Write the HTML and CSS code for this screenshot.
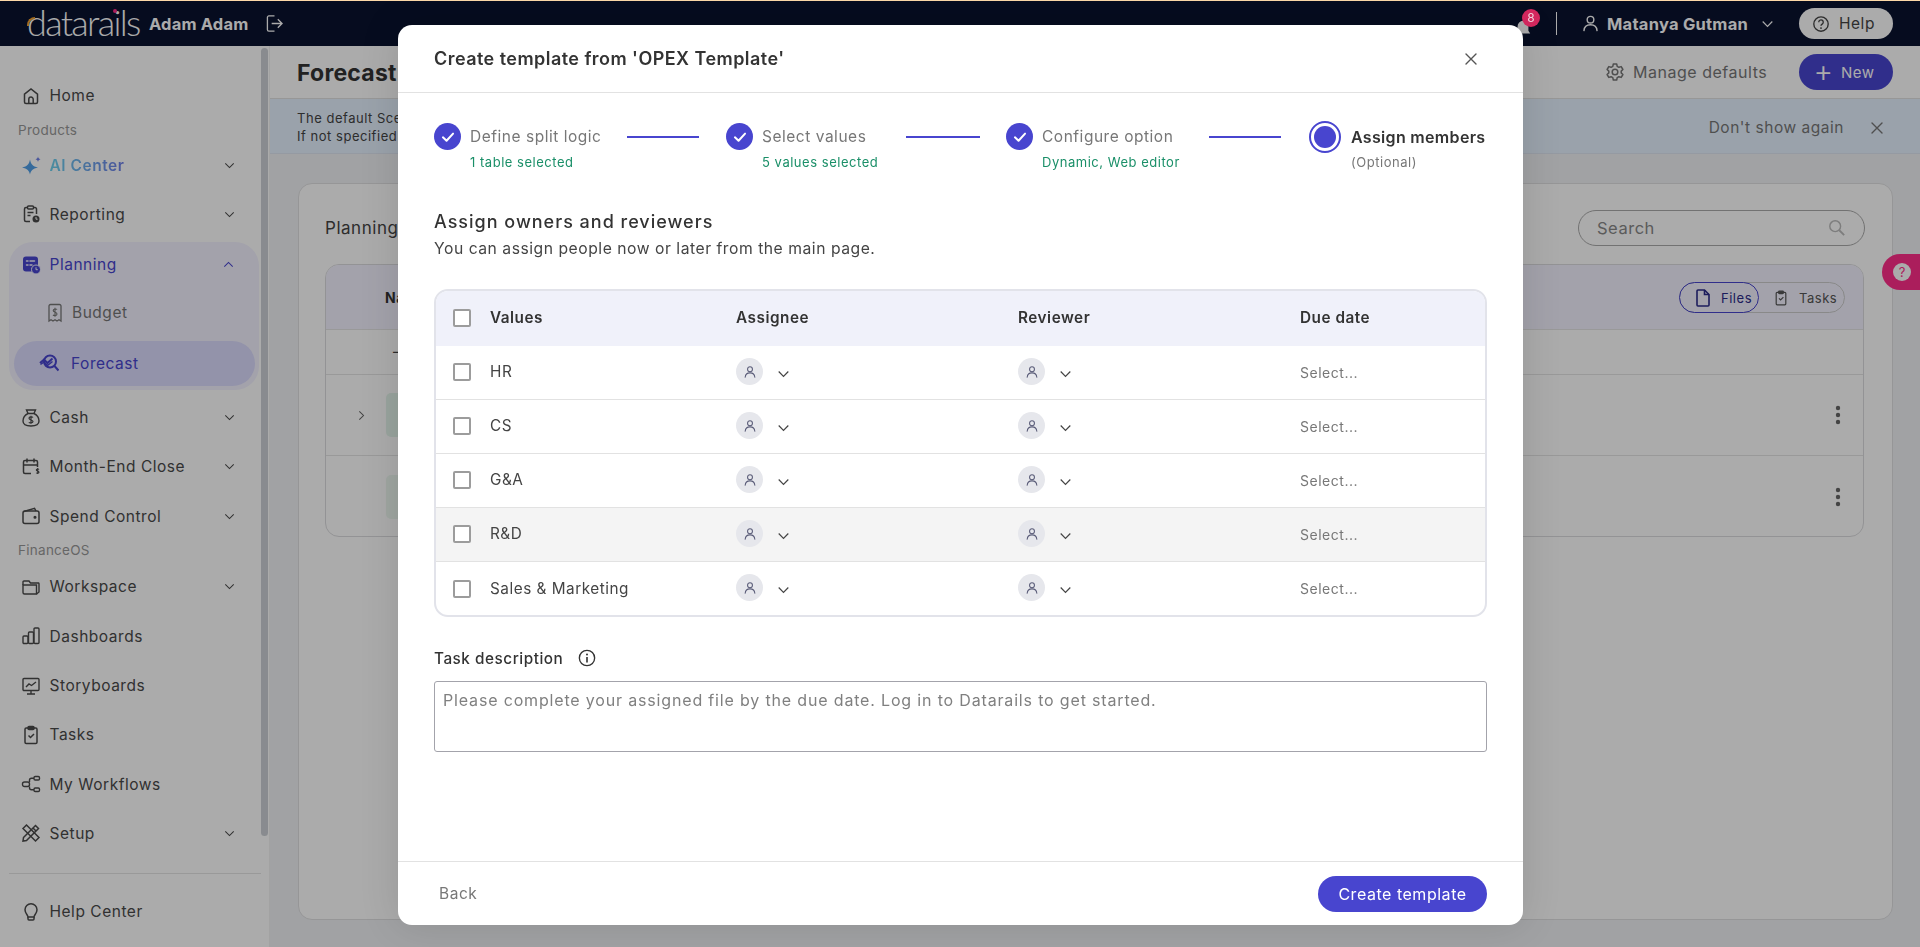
FILE: index.html
```html
<!DOCTYPE html>
<html lang="en">
<head>
<meta charset="utf-8">
<title>Create template</title>
<link rel="stylesheet" href="styles.css">
</head>
<body>
<svg class="sprite" aria-hidden="true">
  <symbol id="chev" viewBox="0 0 12 8"><path d="M1.2 1.5 6 6.3l4.8-4.8" fill="none" stroke="currentColor" stroke-width="1.2"/></symbol>
  <symbol id="person" viewBox="0 0 16 16"><circle cx="8" cy="4.8" r="2.8" fill="none" stroke="currentColor" stroke-width="1.2"/><path d="M2.5 14c.2-3.2 2.4-5 5.5-5s5.300 1.800 5.500 5" fill="none" stroke="currentColor" stroke-width="1.2" stroke-linecap="round"/></symbol>
  <symbol id="check" viewBox="0 0 16 16"><path d="M3.500 8.300 6.700 11.300 12.500 5" fill="none" stroke="#fff" stroke-width="1.800" stroke-linecap="round" stroke-linejoin="round"/></symbol>
  <symbol id="x" viewBox="0 0 14 14"><path d="M2 2l10 10M12 2 2 12" fill="none" stroke="currentColor" stroke-width="1.400" stroke-linecap="round"/></symbol>
  <symbol id="home" viewBox="0 0 20 20" fill="none" stroke="currentColor" stroke-width="1.500"><path d="M3.500 8.200 10 3l6.500 5.200V16a1.500 1.500 0 0 1-1.500 1.500H5A1.500 1.500 0 0 1 3.500 16z"/><path d="M7.800 17.500v-4.200a2.200 2.200 0 0 1 4.400 0v4.200"/></symbol>
  <symbol id="spark" viewBox="0 0 20 20"><path d="M9 4.500c.8 4.600 2.600 6.800 8 8-5.400 1.200-7.200 3.400-8 7-.8-3.600-2.600-5.800-8-7 5.400-1.200 7.200-3.400 8-8z" fill="#4f9fe8"/><path d="M17 1.500c.3 1.500.8 2.200 2.500 2.800-1.700.5-2.200 1.200-2.500 2.700-.3-1.500-.8-2.200-2.500-2.700 1.700-.6 2.200-1.300 2.500-2.800z" fill="#6d7fe8"/></symbol>
  <symbol id="report" viewBox="0 0 20 20" fill="none" stroke="currentColor" stroke-width="1.500"><path d="M9 17.500H5A1.500 1.500 0 0 1 3.500 16V5A1.500 1.500 0 0 1 5 3.500h1.500M12.500 3.500H14A1.500 1.500 0 0 1 15.500 5v5"/><rect x="6.500" y="2" width="6" height="3" rx="1"/><path d="M6.500 8.500h6M6.500 11.500h3"/><circle cx="15" cy="15" r="3.500" fill="currentColor" stroke="none"/><path d="M15 13v2.200h1.600" stroke="#fff" stroke-width="1"/></symbol>
  <symbol id="plan" viewBox="0 0 20 20"><rect x="2" y="1.500" width="15" height="15" rx="3" fill="currentColor"/><path d="M5.500 6h1.500M9 6h4.500M5.500 10h1.500M9 10h2" stroke="#f3f2ff" stroke-width="1.500" stroke-linecap="round"/><circle cx="15" cy="14.500" r="4.500" fill="currentColor" stroke="#f3f2ff"/><path d="M15 12.300v2.400h1.800" stroke="#f3f2ff" fill="none"/></symbol>
  <symbol id="budget" viewBox="0 0 16 20" fill="none" stroke="currentColor" stroke-width="1.300"><path d="M2 3a1.500 1.500 0 0 1 1.500-1.500h9A1.500 1.500 0 0 1 14 3v15l-2-1.300-2 1.300-2-1.300L6 18l-2-1.300L2 18z"/><path d="M10 6.500C9.500 5.800 6.200 5.500 6.200 7.500S10 9 10 11s-3.300 1.700-4 1M8 4.800v9" stroke-width="1.100"/></symbol>
  <symbol id="forecast" viewBox="0 0 20 20" fill="none" stroke="currentColor" stroke-width="2"><circle cx="11" cy="8.500" r="6"/><path d="M15.500 13l4 4.500"/><path d="M1 10 5 6.500l3.500 3.500 5-4.500"/><path d="M1.500 11.500 5 9l3.500 3.500 5-4" stroke-width="1.500"/></symbol>
  <symbol id="cash" viewBox="0 0 20 20" fill="none" stroke="currentColor" stroke-width="1.400"><path d="M7 5.500 5.500 2h9L13 5.500"/><path d="M7 5.500h6c3 1.500 5 4.500 5 7.500 0 3.500-3 5-8 5s-8-1.500-8-5c0-3 2-6 5-7.500z"/><path d="M12 9.500c-.6-.8-4-1-4 .8S12 11.800 12 13.500s-3.400 1.700-4.200.8M10 7.800v8" stroke-width="1.200"/></symbol>
  <symbol id="month" viewBox="0 0 20 20" fill="none" stroke="currentColor" stroke-width="1.500"><path d="M10 16.500H4A1.500 1.500 0 0 1 2.500 15V5A1.500 1.500 0 0 1 4 3.500h11A1.500 1.500 0 0 1 16.500 5v5M2.500 8h14M6 1.500v4M13 1.500v4"/><path d="M18 12.500c-.5-.6-2.700-.7-2.700.5s2.700 1 2.700 2.200-2.300 1.200-2.800.5M16.700 11v6" stroke-width="1.100"/></symbol>
  <symbol id="wallet" viewBox="0 0 20 20" fill="none" stroke="currentColor" stroke-width="1.500"><rect x="2" y="5" width="16" height="12.500" rx="2"/><path d="M3 5.500 13.500 2.300 15 5"/><circle cx="14" cy="11.300" r=".8" fill="currentColor"/></symbol>
  <symbol id="folder" viewBox="0 0 20 20" fill="none" stroke="currentColor" stroke-width="1.400"><path d="M2 8h13.500v9H3.500A1.500 1.500 0 0 1 2 15.500z"/><path d="M2 8V5a1 1 0 0 1 1-1h5l1.500 2H17.500a.8.8 0 0 1 .5.700V15l-2.500 2"/></symbol>
  <symbol id="bars" viewBox="0 0 20 20" fill="none" stroke="currentColor" stroke-width="1.400"><rect x="2" y="10" width="5" height="7.500" rx="1"/><rect x="7.500" y="6" width="5" height="11.500" rx="1"/><rect x="13" y="2" width="5" height="15.500" rx="1"/></symbol>
  <symbol id="screen" viewBox="0 0 20 20" fill="none" stroke="currentColor" stroke-width="1.400"><rect x="2" y="2.500" width="16" height="12" rx="1"/><path d="M10 14.500v3.500M6 18h8M5 11l3-3 2.500 1.500L15 6"/></symbol>
  <symbol id="clip" viewBox="0 0 20 20" fill="none" stroke="currentColor" stroke-width="1.500"><rect x="4" y="3" width="12" height="15.500" rx="1.200"/><rect x="7" y="1.500" width="6" height="3" rx="1" fill="currentColor"/><path d="M7.500 10.500 9.500 12.500 13 9"/></symbol>
  <symbol id="flow" viewBox="0 0 20 20" fill="none" stroke="currentColor" stroke-width="1.400"><rect x="1.500" y="8" width="7" height="4.500" rx="2"/><rect x="13" y="2.500" width="5.500" height="3.500" rx="1.200"/><rect x="13" y="14" width="5.500" height="3.500" rx="1.200"/><path d="M13 4.300h-2.500a2 2 0 0 0-2 2V8M13 15.800h-2.500a2 2 0 0 1-2-2v-1.300"/></symbol>
  <symbol id="setup" viewBox="0 0 20 20" fill="none" stroke="currentColor" stroke-width="1.500"><path d="M2.500 14.500 14.500 2.500 17.500 5.500 5.500 17.500l-3.500.5z"/><path d="M12 5l3 3M5.500 2 2 5.500 14.500 18l3.500-3.500z"/></symbol>
  <symbol id="bulb" viewBox="0 0 20 20" fill="none" stroke="currentColor" stroke-width="1.500"><path d="M7 15c0-2-3-3.500-3-7.200a6 6 0 0 1 12 0C16 11.500 13 13 13 15z"/><path d="M7.500 18h5M7 15v2a1 1 0 0 0 1 1h4a1 1 0 0 0 1-1v-2"/></symbol>
  <symbol id="exit" viewBox="0 0 18 20" fill="none" stroke="currentColor" stroke-width="1.400"><path d="M9 2H3a1.500 1.500 0 0 0-1.500 1.500v13A1.500 1.500 0 0 0 3 18h6"/><path d="M6 10h11M12.500 5.500 17 10l-4.500 4.500"/></symbol>
  <symbol id="quest" viewBox="0 0 20 20"><circle cx="10" cy="10" r="8" fill="none" stroke="currentColor" stroke-width="1.500"/><path d="M7.500 8a2.500 2.500 0 1 1 3.800 2.100c-.8.500-1.300 1-1.300 1.900" fill="none" stroke="currentColor" stroke-width="1.500"/><circle cx="10" cy="14.500" r="1" fill="currentColor"/></symbol>
  <symbol id="gear" viewBox="0 0 20 20" fill="none" stroke="currentColor" stroke-width="1.500"><circle cx="10" cy="10" r="2.800"/><path d="M8.300 2h3.400l.5 2.300 1.700 1 2.300-.7 1.700 2.900-1.700 1.600v1.800l1.700 1.600-1.700 2.900-2.300-.7-1.700 1-.5 2.300H8.300l-.5-2.300-1.700-1-2.300.7-1.700-2.900 1.700-1.600V9.100L2.100 7.500l1.700-2.900 2.300.7 1.700-1z" stroke-linejoin="round"/></symbol>
  <symbol id="search" viewBox="0 0 20 20" fill="none" stroke="currentColor" stroke-width="1.600"><circle cx="8" cy="8" r="6"/><path d="M12.500 12.500 18 18" stroke-width="2"/></symbol>
  <symbol id="file" viewBox="0 0 16 20" fill="none" stroke="currentColor" stroke-width="1.600"><path d="M2 3a1 1 0 0 1 1-1h6.500L14 6.500V17a1 1 0 0 1-1 1H3a1 1 0 0 1-1-1z"/><path d="M9.500 2v4.500H14"/></symbol>
  <symbol id="kebab" viewBox="0 0 6 20"><circle cx="3" cy="3" r="2.200" fill="currentColor"/><circle cx="3" cy="10" r="2.200" fill="currentColor"/><circle cx="3" cy="17" r="2.200" fill="currentColor"/></symbol>
  <symbol id="info" viewBox="0 0 20 20"><circle cx="10" cy="10" r="8.500" fill="none" stroke="currentColor" stroke-width="1.500"/><circle cx="10" cy="6" r="1.100" fill="currentColor"/><path d="M10 9v6" stroke="currentColor" stroke-width="1.800"/></symbol>
  <symbol id="bell" viewBox="0 0 20 20"><path d="M10 2a6 6 0 0 1 6 6v5l2 3H2l2-3V8a6 6 0 0 1 6-6z" fill="currentColor"/></symbol>
</svg>

<div class="app">
  <header class="topbar">
    <div class="brand"><span class="logo">datarails<span class="logo-arc"></span><span class="logo-dot"></span></span><span class="account">Adam Adam</span><svg class="exit"><use href="#exit"/></svg></div>
    <div class="top-right">
      <span class="bell-wrap"><svg class="bell"><use href="#bell"/></svg><span class="badge">8</span></span>
      <span class="divider"></span>
      <svg class="user-ico"><use href="#person"/></svg>
      <span class="user-name">Matanya Gutman</span>
      <svg class="user-chev"><use href="#chev"/></svg>
      <span class="help-pill"><svg class="help-ico"><use href="#quest"/></svg>Help</span>
    </div>
  </header>
  <div class="body">
    <aside class="sidebar">
      <nav class="nav">
        <a class="nav-item"><svg class="ico"><use href="#home"/></svg><span>Home</span></a>
        <div class="nav-label">Products</div>
        <a class="nav-item ai-row"><svg class="ico"><use href="#spark"/></svg><span class="ai">AI Center</span><svg class="nav-chev"><use href="#chev"/></svg></a>
        <a class="nav-item"><svg class="ico"><use href="#report"/></svg><span>Reporting</span><svg class="nav-chev"><use href="#chev"/></svg></a>
        <div class="group">
          <a class="nav-item group-head"><svg class="ico"><use href="#plan"/></svg><span>Planning</span><svg class="nav-chev up"><use href="#chev"/></svg></a>
          <a class="nav-item sub"><svg class="sub-ico"><use href="#budget"/></svg><span>Budget</span></a>
          <a class="nav-item sub current"><svg class="sub-ico wide"><use href="#forecast"/></svg><span>Forecast</span></a>
        </div>
        <a class="nav-item after-group"><svg class="ico"><use href="#cash"/></svg><span>Cash</span><svg class="nav-chev"><use href="#chev"/></svg></a>
        <a class="nav-item"><svg class="ico"><use href="#month"/></svg><span>Month-End Close</span><svg class="nav-chev"><use href="#chev"/></svg></a>
        <a class="nav-item"><svg class="ico"><use href="#wallet"/></svg><span>Spend Control</span><svg class="nav-chev"><use href="#chev"/></svg></a>
        <div class="nav-label short">FinanceOS</div>
        <a class="nav-item"><svg class="ico"><use href="#folder"/></svg><span>Workspace</span><svg class="nav-chev"><use href="#chev"/></svg></a>
        <a class="nav-item"><svg class="ico"><use href="#bars"/></svg><span>Dashboards</span></a>
        <a class="nav-item"><svg class="ico"><use href="#screen"/></svg><span>Storyboards</span></a>
        <a class="nav-item"><svg class="ico"><use href="#clip"/></svg><span>Tasks</span></a>
        <a class="nav-item"><svg class="ico"><use href="#flow"/></svg><span>My Workflows</span></a>
        <a class="nav-item"><svg class="ico"><use href="#setup"/></svg><span>Setup</span><svg class="nav-chev"><use href="#chev"/></svg></a>
      </nav>
      <div class="nav-foot"><a class="nav-item"><svg class="ico"><use href="#bulb"/></svg><span>Help Center</span></a></div>
      <div class="scroll-thumb"></div>
    </aside>
    <main class="main">
      <div class="page-head">
        <h1 class="page-title">Forecast</h1>
        <div class="page-actions">
          <span class="manage"><svg class="gear"><use href="#gear"/></svg>Manage defaults</span>
          <span class="new-btn"><span class="plus">+</span>New</span>
        </div>
      </div>
      <div class="banner">
        <p class="banner-text">The default Scenario<br>If not specified</p>
        <span class="banner-side">Don't show again<svg class="banner-x"><use href="#x"/></svg></span>
      </div>
      <section class="card">
        <div class="card-head">
          <h2 class="card-title">Planning</h2>
          <div class="search"><span>Search</span><svg class="search-ico"><use href="#search"/></svg></div>
        </div>
        <div class="files">
          <div class="files-head">
            <span class="files-name">Name</span>
            <div class="toggle">
              <span class="tog on"><svg class="tog-ico"><use href="#file"/></svg>Files</span>
              <span class="tog"><svg class="tog-ico"><use href="#clip"/></svg>Tasks</span>
            </div>
          </div>
          <div class="files-sub">—</div>
          <div class="files-row"><svg class="row-open"><use href="#chev"/></svg><span class="thumb"></span><svg class="kebab"><use href="#kebab"/></svg></div>
          <div class="files-row"><span class="row-gap"></span><span class="thumb pale"></span><svg class="kebab"><use href="#kebab"/></svg></div>
        </div>
      </section>
    </main>
  </div>
  <div class="help-tab"><span class="help-dot">?</span></div>
</div>

<div class="scrim"></div>

<div class="modal">
  <div class="modal-head">
    <h2 class="modal-title">Create template from 'OPEX Template'</h2>
    <svg class="modal-x"><use href="#x"/></svg>
  </div>
  <div class="modal-body">
    <div class="stepper">
      <div class="step">
        <span class="step-dot"><svg class="step-check"><use href="#check"/></svg></span>
        <div class="step-text"><div class="step-name">Define split logic</div><div class="step-sub">1 table selected</div></div>
      </div>
      <span class="step-line"></span>
      <div class="step">
        <span class="step-dot"><svg class="step-check"><use href="#check"/></svg></span>
        <div class="step-text"><div class="step-name">Select values</div><div class="step-sub">5 values selected</div></div>
      </div>
      <span class="step-line"></span>
      <div class="step third">
        <span class="step-dot"><svg class="step-check"><use href="#check"/></svg></span>
        <div class="step-text"><div class="step-name">Configure option</div><div class="step-sub">Dynamic, Web editor</div></div>
      </div>
      <span class="step-line"></span>
      <div class="step last">
        <span class="step-ring"><span class="step-fill"></span></span>
        <div class="step-text"><div class="step-name active">Assign members</div><div class="step-sub muted">(Optional)</div></div>
      </div>
    </div>

    <h3 class="sec-title">Assign owners and reviewers</h3>
    <p class="sec-sub">You can assign people now or later from the main page.</p>

    <div class="table">
      <div class="t-row t-head">
        <div class="t-first"><span class="box"></span>Values</div><div>Assignee</div><div>Reviewer</div><div>Due date</div>
      </div>
      <div class="t-row">
        <div class="t-first"><span class="box"></span>HR</div>
        <div class="pick"><span class="avatar"><svg class="avatar-ico"><use href="#person"/></svg></span><svg class="pick-chev"><use href="#chev"/></svg></div>
        <div class="pick"><span class="avatar"><svg class="avatar-ico"><use href="#person"/></svg></span><svg class="pick-chev"><use href="#chev"/></svg></div>
        <div class="due">Select...</div>
      </div>
      <div class="t-row">
        <div class="t-first"><span class="box"></span>CS</div>
        <div class="pick"><span class="avatar"><svg class="avatar-ico"><use href="#person"/></svg></span><svg class="pick-chev"><use href="#chev"/></svg></div>
        <div class="pick"><span class="avatar"><svg class="avatar-ico"><use href="#person"/></svg></span><svg class="pick-chev"><use href="#chev"/></svg></div>
        <div class="due">Select...</div>
      </div>
      <div class="t-row">
        <div class="t-first"><span class="box"></span>G&amp;A</div>
        <div class="pick"><span class="avatar"><svg class="avatar-ico"><use href="#person"/></svg></span><svg class="pick-chev"><use href="#chev"/></svg></div>
        <div class="pick"><span class="avatar"><svg class="avatar-ico"><use href="#person"/></svg></span><svg class="pick-chev"><use href="#chev"/></svg></div>
        <div class="due">Select...</div>
      </div>
      <div class="t-row hover">
        <div class="t-first"><span class="box"></span>R&amp;D</div>
        <div class="pick"><span class="avatar"><svg class="avatar-ico"><use href="#person"/></svg></span><svg class="pick-chev"><use href="#chev"/></svg></div>
        <div class="pick"><span class="avatar"><svg class="avatar-ico"><use href="#person"/></svg></span><svg class="pick-chev"><use href="#chev"/></svg></div>
        <div class="due">Select...</div>
      </div>
      <div class="t-row end">
        <div class="t-first"><span class="box"></span>Sales &amp; Marketing</div>
        <div class="pick"><span class="avatar"><svg class="avatar-ico"><use href="#person"/></svg></span><svg class="pick-chev"><use href="#chev"/></svg></div>
        <div class="pick"><span class="avatar"><svg class="avatar-ico"><use href="#person"/></svg></span><svg class="pick-chev"><use href="#chev"/></svg></div>
        <div class="due">Select...</div>
      </div>
    </div>

    <div class="task-label">Task description<svg class="info"><use href="#info"/></svg></div>
    <div class="task-input">Please complete your assigned file by the due date. Log in to Datarails to get started.</div>
  </div>
  <div class="modal-foot">
    <span class="back">Back</span>
    <span class="create">Create template</span>
  </div>
</div>
</body>
</html>
```

FILE: styles.css
```css
* { box-sizing: border-box; }
html, body { margin: 0; height: 100%; }
body { font-family: Inter, "Liberation Sans", sans-serif; font-size: 15px; color: #444; overflow: hidden; background: #f0f2f5; letter-spacing: .035em; }
h1, h2, h3, p { margin: 0; font: inherit; }
svg { display: block; flex: none; }
.sprite { display: none; }

.app { height: 947px; display: flex; flex-direction: column; border-top: 1px solid #fdd9a8; position: relative; }

/* top bar */
.topbar { height: 45px; flex: none; background: #09122f; display: flex; align-items: center; justify-content: space-between; padding: 0 27px; color: #fff; }
.brand { display: flex; align-items: center; }
.logo { position: relative; font-family: Lato, sans-serif; font-weight: 300; font-size: 36px; letter-spacing: -1.7px; line-height: 45px; width: 122px; margin-top: -3px; color: #fff; }
.logo-arc { position: absolute; left: 0; top: 17px; width: 8px; height: 9px; border-left: 2px solid #f0a030; border-top: 2px solid #f0a030; border-radius: 8px 0 0 0; }
.logo-dot { position: absolute; left: 86px; top: 9px; width: 4px; height: 4px; border-radius: 50%; background: #ff2e89; }
.account { font-weight: 700; font-size: 16.5px; letter-spacing: .01em; width: 117px; white-space: nowrap; }
.exit { width: 17px; height: 19px; }
.top-right { display: flex; align-items: center; }
.bell-wrap { position: relative; width: 27px; height: 24px; margin-right: 11px; }
.bell { width: 18px; height: 20px; color: #fff; position: absolute; left: -4px; top: 6px; }
.badge { position: absolute; left: 4px; top: -3px; width: 18px; height: 18px; border-radius: 50%; background: #d5285f; color: #f3d5df; font-size: 12px; line-height: 18px; text-align: center; z-index: 3; letter-spacing: 0; }
.divider { width: 1px; height: 23px; background: #fff; margin-right: 24px; }
.user-ico { width: 19px; height: 19px; margin-right: 7px; }
.user-name { font-weight: 700; font-size: 16.5px; letter-spacing: .015em; width: 154px; white-space: nowrap; }
.user-chev { width: 13px; height: 8px; margin-right: 25px; }
.help-pill { width: 94px; height: 31px; border-radius: 16px; background: #fff; color: #444; display: flex; align-items: center; padding-left: 13px; gap: 9px; font-size: 15.5px; }
.help-ico { width: 18px; height: 18px; }

/* shell */
.body { flex: 1; display: flex; min-height: 0; }
.sidebar { width: 270px; flex: none; background: #fff; border-right: 1px solid #f2f2f2; position: relative; }
.nav { padding-top: 25px; }
.nav-item { display: flex; align-items: center; height: 49.3px; padding-left: 21px; color: #4a4a4a; font-size: 15.5px; }
.ai-row { height: 48.3px; }
.ico { width: 20px; height: 20px; margin-right: 8.5px; }
.nav-chev { width: 11px; height: 7px; margin-left: auto; margin-right: 34px; }
.nav-chev.up { transform: rotate(180deg); margin-right: 25px; }
.nav-label { height: 21px; line-height: 21px; padding-left: 18px; font-size: 13.5px; color: #999; letter-spacing: .02em; }
.nav-label.short { height: 21.5px; line-height: 18px; }
.ai { font-weight: 600; background: linear-gradient(90deg, #6fd2ee, #6f7fe8); -webkit-background-clip: text; background-clip: text; color: transparent; }
.group { margin: 3px 10px 0 9px; height: 148px; background: #f3f2ff; border-radius: 24px; }
.group .nav-item { padding-left: 12px; }
.group-head { height: 46px; color: #4845cf; }
.group-head .ico { color: #4845cf; }
.nav-item.sub { height: 50px; padding-left: 38px; color: #777; }
.sub-ico { width: 16px; height: 20px; margin-right: 9px; }
.sub-ico.wide { width: 20px; height: 20px; margin-left: -4px; margin-right: 9px; }
.nav-item.current { height: 45px; margin: 3px 4px 0 5px; padding-left: 29px; border-radius: 23px; background: #dbdbfe; color: #4845cf; }
.nav-item.current .sub-ico.wide { margin-right: 12px; }
.after-group { margin-top: 3px; }
.nav-foot { position: absolute; left: 9px; right: 8px; top: 827px; border-top: 1px solid #e4e4e4; padding-top: 13px; }
.nav-foot .nav-item { padding-left: 12px; }
.scroll-thumb { position: absolute; left: 261px; top: 2px; width: 7px; height: 788px; border-radius: 4px; background: #ccd0d5; }

/* main */
.main { flex: 1; min-width: 0; display: flex; flex-direction: column; }
.page-head { height: 53px; flex: none; background: #fff; border-bottom: 1px solid #e2e2e2; display: flex; align-items: center; justify-content: space-between; padding: 1px 27px 0; }
.page-title { font-size: 23px; font-weight: 700; letter-spacing: .01em; color: #333; }
.page-actions { display: flex; align-items: center; margin-top: -1px; }
.manage { display: flex; align-items: center; gap: 8px; color: #777; font-size: 16px; width: 194px; white-space: nowrap; margin-left: -2px; }
.gear { width: 20px; height: 20px; }
.new-btn { width: 94px; height: 36px; border-radius: 18px; background: #4845cf; color: #fff; display: flex; align-items: center; justify-content: center; gap: 8px; padding-right: 4px; }
.plus { font-size: 30px; font-weight: 300; line-height: 26px; margin-top: -3px; letter-spacing: 0; }
.banner { height: 55px; flex: none; background: #e6f2ff; border-bottom: 1px solid #dfe6f2; display: flex; align-items: center; justify-content: space-between; padding: 1px 27px 0; font-size: 13px; line-height: 18px; }
.banner-side { display: flex; align-items: center; color: #777; font-size: 15.5px; margin-top: 3px; }
.banner-x { width: 14px; height: 14px; margin-left: 26px; margin-right: 9px; }
.card { flex: 1; margin: 29px 27px 27px 28px; background: #fff; border: 1px solid #e0e0e2; border-radius: 14px; padding: 26px 28px 0 26px; }
.card-head { display: flex; align-items: center; justify-content: space-between; height: 36px; }
.card-title { font-size: 17px; color: #444; }
.search { width: 287px; height: 36px; border: 1px solid #aaa; border-radius: 18px; margin-right: -1px; display: flex; align-items: center; justify-content: space-between; padding: 0 18px; color: #888; font-size: 16.5px; }
.search-ico { width: 18px; height: 18px; color: #bbb; }
.files { margin-top: 18px; height: 273px; border: 1px solid #dcdcdf; border-radius: 14px; overflow: hidden; }
.files-head { height: 65px; background: #f3f2ff; border-bottom: 1px solid #e4e4e4; display: flex; align-items: center; justify-content: space-between; padding: 0 18px 0 59px; }
.files-name { font-weight: 700; color: #333; font-size: 14px; }
.toggle { width: 166px; height: 31px; border: 1px solid #ccc; border-radius: 16px; display: flex; align-items: center; font-size: 13px; color: #555; margin-top: 1px; }
.tog { display: flex; align-items: center; gap: 10px; padding-left: 15px; height: 31px; border-radius: 16px; margin-left: -1px; }
.tog.on { width: 80px; border: 1px solid #4845cf; color: #2a2a8a; }
.tog-ico { width: 16px; height: 20px; }
.files-sub { height: 45px; border-bottom: 1px solid #e4e4e4; padding-left: 67px; line-height: 44px; }
.files-row { height: 81px; display: flex; align-items: center; border-bottom: 1px solid #e4e4e4; padding-right: 22px; }
.files-row:last-child { border-bottom: 0; }
.row-open { width: 11px; height: 7px; transform: rotate(-90deg); margin-left: 30px; margin-right: 19px; color: #666; }
.row-gap { width: 60px; flex: none; }
.thumb { width: 60px; height: 44px; border-radius: 5px; background: #e5f5ec; }
.thumb.pale { background: #eef8f1; }
.kebab { width: 6px; height: 20px; margin-left: auto; color: #666; }
.help-tab { position: absolute; right: 0; top: 253px; width: 38px; height: 36px; border-radius: 18px 0 0 18px; background: #ff2e89; display: flex; align-items: center; padding-left: 11px; }
.help-dot { width: 18px; height: 18px; border-radius: 50%; background: #fff; color: #ff2e89; font-size: 13px; line-height: 18px; text-align: center; letter-spacing: 0; }

/* dialog layer */
.scrim { position: fixed; inset: 1px 0 0 0; background: rgba(0, 0, 0, .33); z-index: 2; }
.modal { position: fixed; left: 398px; top: 25px; width: 1125px; height: 900px; background: #fff; border-radius: 14px; z-index: 3; display: flex; flex-direction: column; box-shadow: 0 0 40px rgba(0, 0, 0, .12); }
.modal-head { height: 68px; flex: none; border-bottom: 1px solid #e2e2e2; display: flex; align-items: center; justify-content: space-between; padding: 0 45px 0 36px; }
.modal-title { font-size: 18px; font-weight: 600; color: #333; letter-spacing: .025em; }
.modal-x { width: 14px; height: 14px; color: #555; }
.modal-body { flex: 1; padding: 28px 36px 0; min-height: 0; }

.stepper { display: grid; grid-template-columns: 193px 72px 207px 74px 229px 72px 1fr; height: 54px; }
.step { display: flex; padding-top: 2px; }
.step ~ .step { margin-left: 27px; }
.step ~ .step.third { margin-left: 26px; }
.step ~ .step.last { margin-left: 28px; padding-top: 0; }
.step-dot { width: 27px; height: 27px; border-radius: 50%; background: #4845cf; margin-right: 9px; display: flex; align-items: center; justify-content: center; flex: none; }
.step-check { width: 18px; height: 18px; }
.step-ring { width: 32px; height: 32px; border: 2px solid #4845cf; border-radius: 50%; padding: 3px; margin-right: 10px; flex: none; }
.step-fill { display: block; width: 22px; height: 22px; border-radius: 50%; background: #4845cf; }
.step-text { padding-top: 1px; white-space: nowrap; }
.last .step-text { padding-top: 3px; }
.step-name { font-size: 15.5px; line-height: 26px; color: #777; }
.step-name.active { color: #333; font-weight: 600; font-size: 16px; letter-spacing: .02em; }
.step-sub { font-size: 13px; line-height: 25px; color: #1a8f68; }
.step-sub.muted { color: #777; }
.step-line { height: 2px; margin-top: 15px; background: #4845cf; }

.sec-title { margin-top: 35px; font-size: 18px; line-height: 24px; font-weight: 500; color: #333; letter-spacing: .055em; }
.sec-sub { margin-top: 3px; font-size: 15.7px; line-height: 24px; color: #444; }

.table { margin-top: 28px; border: 2px solid #e2e3ea; border-radius: 14px; overflow: hidden; }
.t-row { display: grid; grid-template-columns: 300px 282px 282px 1fr; align-items: center; height: 54px; border-bottom: 1px solid #e2e2e2; font-size: 15.3px; color: #444; }
.t-row.end { border-bottom: 0; height: 53px; }
.t-row.hover { background: #f4f4f4; }
.t-head { height: 55px; background: #f0f1fa; border-bottom: 0; font-weight: 600; color: #333; padding-bottom: 2px; }
.t-first { display: flex; align-items: center; padding-left: 17px; margin-top: -2px; }
.t-head .t-first { margin-top: 0; }
.end .t-first { margin-top: 0; }
.box { width: 18px; height: 18px; border: 2px solid #9c9c9c; border-radius: 2px; background: #fff; margin-right: 19px; flex: none; }
.pick { display: flex; align-items: center; }
.avatar { width: 27px; height: 27px; border-radius: 50%; background: #e6e7ec; display: flex; align-items: center; justify-content: center; margin-top: -2px; }
.avatar-ico { width: 14px; height: 14px; color: #5a5c78; }
.pick-chev { width: 13px; height: 8px; margin-left: 14px; color: #444; margin-top: 2px; }
.due { color: #777; font-size: 14px; }

.task-label { margin-top: 30px; height: 22px; display: flex; align-items: center; font-size: 15.3px; font-weight: 500; color: #333; }
.info { width: 18px; height: 18px; margin-left: 15px; color: #333; }
.task-input { margin-top: 12px; height: 71px; border: 1px solid #a3a3ab; border-radius: 3px; padding: 7px 8px; line-height: 22px; font-size: 16px; letter-spacing: .052em; color: #808080; }

.modal-foot { height: 64px; flex: none; border-top: 1px solid #e2e2e2; display: flex; align-items: center; justify-content: space-between; padding: 0 36px 0 41px; }
.back { color: #777; font-size: 15.5px; }
.create { width: 169px; height: 36px; border-radius: 18px; background: #4845cf; color: #fff; display: flex; align-items: center; justify-content: center; font-size: 16px; }
```
